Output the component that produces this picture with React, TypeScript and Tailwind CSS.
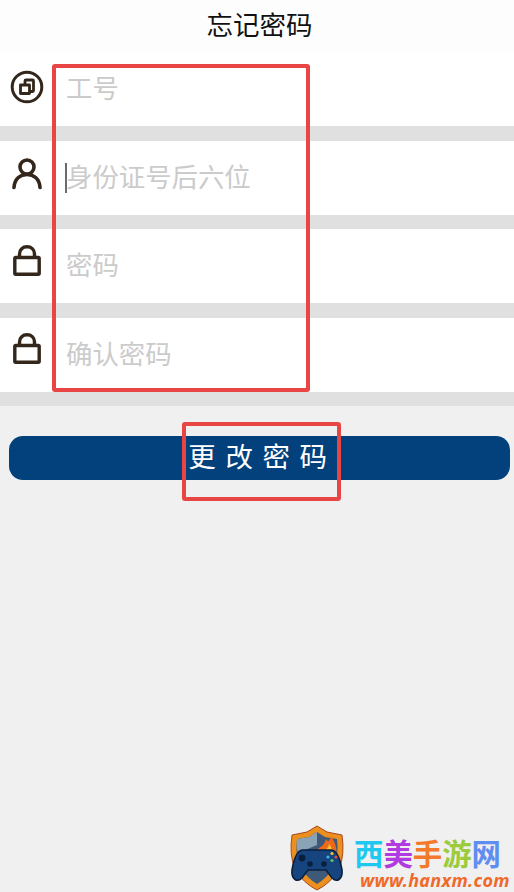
import React from 'react';

const FONT = "font-['Noto_Sans_CJK_SC','Noto_Sans',sans-serif]";

const IdIcon = () => (
  <svg width="34" height="34" viewBox="0 0 34 34" fill="none" stroke="#33261a" strokeWidth="2.8">
    <circle cx="17" cy="17" r="14.8" strokeWidth="3" />
    <path d="M10.5 15 H19.5 V23.5 H10.5 Z" strokeLinejoin="round" />
    <path d="M15 14.5 V11 Q15 10 16 10 H22.5 Q23.5 10 23.5 11 V20.5 Q23.5 21.5 22.5 21.5 H20" strokeLinejoin="round" />
  </svg>
);

const UserIcon = () => (
  <svg width="32" height="32" viewBox="0 0 32 32" fill="none" stroke="#33261a" strokeWidth="3.6" strokeLinecap="round">
    <circle cx="16" cy="9" r="7" />
    <path d="M3 29.5 C3.5 21 9 16.5 16 16.5 C23 16.5 28.5 21 29 29.5" />
  </svg>
);

const LockIcon = () => (
  <svg width="28" height="31" viewBox="0 0 28 31" fill="none" stroke="#33261a" strokeWidth="3.4">
    <path d="M6.5 12 V9 C6.5 4.4 9.8 1.8 14 1.8 C18.2 1.8 21.5 4.4 21.5 9 V12" />
    <rect x="1.8" y="12.5" width="24.4" height="16.8" rx="1" />
  </svg>
);

const rows = [
  { id: 'no', icon: <IdIcon />, iconClass: 'mb-[4px]', placeholder: '工号', gap: 'h-[15px]' },
  { id: 'card', icon: <UserIcon />, iconClass: 'mb-[8px]', placeholder: '身份证号后六位', gap: 'h-[14px]', caret: true },
  { id: 'pwd', icon: <LockIcon />, iconClass: 'mb-[12px]', placeholder: '密码', gap: 'h-[15px]' },
  { id: 'confirm', icon: <LockIcon />, iconClass: 'mb-[13px]', placeholder: '确认密码', gap: 'h-[14px]' },
];

const brand = [
  { ch: '西', color: 'text-[#1fc8ee]' },
  { ch: '美', color: 'text-[#b03be0]' },
  { ch: '手', color: 'text-[#f5792a]' },
  { ch: '游', color: 'text-[#9ccb3c]' },
  { ch: '网', color: 'text-[#5f8df0]' },
];

const Logo = () => (
  <svg width="58" height="66" viewBox="0 0 58 66">
    <path d="M29 1 L39 7 L54 10 Q57 30 51 44 Q43 58 29 65 Q15 58 7 44 Q1 30 4 10 L19 7 Z" fill="#ec8f1e" stroke="#a8481a" strokeWidth="1" />
    <path d="M29 7 L37 12 L49 14 Q51 30 46 42 Q39 53 29 59 Q19 53 12 42 Q7 30 9 14 L21 12 Z" fill="#3f5a78" />
    <path d="M29 7 L21 12 L9 14 Q8 22 10 28 L29 20 Z" fill="#8aa3b6" />
    <path d="M28 26 C32 21 36 22 38 14 C40 18 42 16 43 11 C48 19 50 26 47 32 L30 32 Z" fill="#ee6a1a" />
    <path d="M35 28 C37 25 40 24 41 19 C45 24 45 28 44 31 L36 31 Z" fill="#fbc02d" />
    <path d="M15 25 H43 C49 25 52 33 54 45 C55 54 49 58 44 53 L38 45 H20 L14 53 C9 58 3 54 4 45 C6 33 9 25 15 25 Z" fill="#15447f" stroke="#0a1f3c" strokeWidth="1.6" />
    <circle cx="14" cy="33" r="3.4" fill="#0a1f3c" />
    <circle cx="22" cy="39" r="2.8" fill="#0a1f3c" />
    <circle cx="36" cy="39" r="2.8" fill="#0a1f3c" />
    <circle cx="44" cy="28.5" r="1.6" fill="#f4c430" />
    <circle cx="48" cy="32" r="1.6" fill="#e5484d" />
    <circle cx="40" cy="32" r="1.6" fill="#3fb5e8" />
    <circle cx="44" cy="35.5" r="1.6" fill="#5cc46b" />
  </svg>
);

export default function App() {
  return (
    <div className={`relative h-[892px] w-[514px] overflow-hidden bg-[#f0f0f1] ${FONT}`}>
      <div className="flex h-[52px] items-center justify-center bg-[#fdfdfd] pb-[4px] pl-[5px] text-[26.5px] text-[#111]">忘记密码</div>

      {rows.map(row => (
        <div key={row.id}>
          <div className="flex h-[74px] items-center bg-white">
            <div className={`flex w-[54px] shrink-0 justify-center ${row.iconClass}`}>{row.icon}</div>
            <div className="relative mb-[4px] ml-[12px] flex-1">
              {row.caret && <span className="absolute left-[-1px] top-[7px] h-[30px] w-[2px] bg-[#6b6b6b]" />}
              <input
                readOnly
                placeholder={row.placeholder}
                className="w-full bg-transparent text-[26.4px] leading-[40px] outline-none placeholder:text-[#cbcbcb]"
              />
            </div>
          </div>
          <div className={`${row.gap} bg-[#e0e0e0]`} />
        </div>
      ))}

      <div className="pt-[30px] pl-[9px] pr-[4px]">
        <button className="flex h-[44px] w-full items-center justify-center rounded-[14px] bg-[#03417c] pb-[4px] pl-[6px] text-[27.5px] tracking-[9.6px] text-white">
          更改密码
        </button>
      </div>

      {/* red annotation boxes drawn over the screenshot */}
      <div className="absolute left-[52px] top-[64px] h-[328px] w-[258px] rounded-[3px] border-4 border-[#e84545]" />
      <div className="absolute left-[182px] top-[422px] h-[79px] w-[159px] rounded-[3px] border-4 border-[#e84545]" />

      {/* site watermark */}
      <div className="absolute bottom-0 left-[288px] flex h-[67px] w-[226px] items-start">
        <Logo />
        <div className="ml-[8px] flex flex-col">
          <div className="mt-[10px] flex h-[34px] text-[29.4px] font-bold leading-[34px]">
            {brand.map(b => (
              <span key={b.ch} className={b.color}>{b.ch}</span>
            ))}
          </div>
          <div className="ml-[6px] mt-[1px] whitespace-nowrap font-['Noto_Sans',sans-serif] text-[18px] font-bold italic leading-[21px] tracking-[0.3px] text-[#ef6a2a]">
            www.hanxm.com
          </div>
        </div>
      </div>
    </div>
  );
}
